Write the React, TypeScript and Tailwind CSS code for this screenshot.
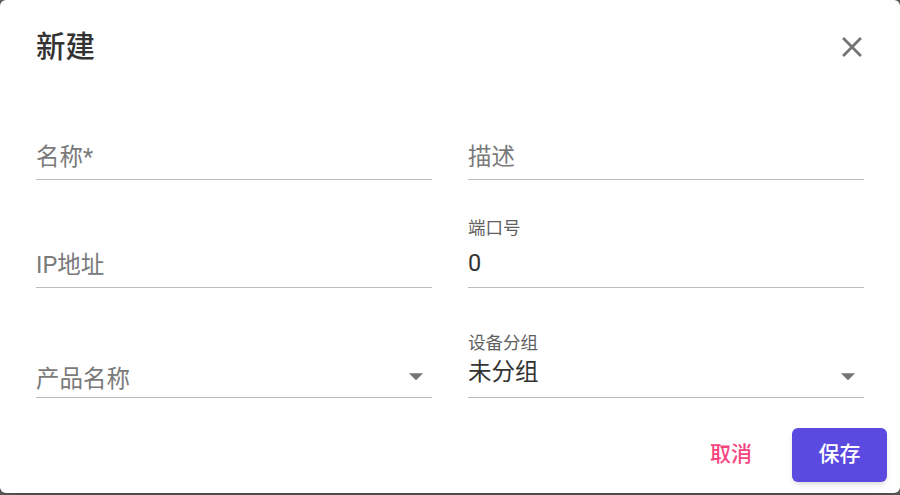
import React from 'react';

const font = { fontFamily: 'Roboto, "Noto Sans CJK SC", sans-serif' };

function ArrowDropDown({ className }: { className?: string }) {
  return (
    <svg width="34" height="34" viewBox="0 0 24 24" className={className} fill="currentColor">
      <path d="M7 10l5 5 5-5z" />
    </svg>
  );
}

function PlainField({ placeholder }: { placeholder: string }) {
  return (
    <div className="flex h-[72px] flex-col justify-end border-b border-[#bdbdbd] pb-[8px]">
      <div className="h-[28px] text-[23.5px] leading-[28px] text-[#7a7a7a]">{placeholder}</div>
    </div>
  );
}

function ValueField({ label, value }: { label: string; value: string }) {
  return (
    <div className="flex h-[72px] flex-col border-b border-[#bdbdbd] pt-[2px]">
      <div className="h-[20px] text-[17.5px] leading-[20px] text-[#5f5f5f]">{label}</div>
      <div className="mt-[11px] h-[28px] text-[23.5px] leading-[28px] text-[#333]">{value}</div>
    </div>
  );
}

function SelectField({ label, value, placeholder }: { label?: string; value?: string; placeholder?: string }) {
  return (
    <div className="flex h-[72px] flex-col border-b border-[#bdbdbd] pt-[7px]">
      <div className="h-[20px] text-[17.5px] leading-[20px] text-[#5f5f5f]">{label}</div>
      <div className="mt-[5px] flex items-start justify-between">
        {value ? (
          <div className="h-[28px] text-[23.5px] leading-[28px] text-[#333]">{value}</div>
        ) : (
          <div className="mt-[7px] h-[28px] text-[23.5px] leading-[28px] text-[#7a7a7a]">{placeholder}</div>
        )}
        <ArrowDropDown className="-mr-[1px] mt-[1px] text-[#757575]" />
      </div>
    </div>
  );
}

export default function App() {
  return (
    <div className="h-[495px] w-[900px] overflow-hidden bg-[#5a5a5a]" style={font}>
      <div className="flex h-[493px] w-[900px] flex-col rounded-[6px] bg-white shadow-xl">
        {/* Header */}
        <div className="flex h-[94px] items-center justify-between pl-9 pr-[31px]">
          <h2 className="text-[29.5px] font-medium leading-[36px] text-[#333]">新建</h2>
          <button className="text-[#757575]" aria-label="close">
            <svg width="34" height="34" viewBox="0 0 24 24" fill="currentColor">
              <path d="M19 6.41L17.59 5 12 10.59 6.41 5 5 6.41 10.59 12 5 17.59 6.41 19 12 13.41 17.59 19 19 17.59 13.41 12z" />
            </svg>
          </button>
        </div>

        {/* Fields */}
        <div className="flex flex-col px-9 pt-[14px]">
          <div className="grid grid-cols-2 gap-x-9">
            <PlainField placeholder="名称*" />
            <PlainField placeholder="描述" />
          </div>
          <div className="mt-9 grid grid-cols-2 gap-x-9">
            <PlainField placeholder="IP地址" />
            <ValueField label="端口号" value="0" />
          </div>
          <div className="mt-[38px] grid grid-cols-2 gap-x-9">
            <SelectField placeholder="产品名称" />
            <SelectField label="设备分组" value="未分组" />
          </div>
        </div>

        {/* Actions */}
        <div className="mt-[30px] flex items-center justify-end pr-[13px]">
          <button className="mr-[26px] h-[54px] px-[14px] text-[21px] font-medium text-[#f5457f]">取消</button>
          <button className="h-[54px] w-[95px] rounded-[6px] bg-[#5b4ae0] text-[21px] font-medium text-white shadow-md">
            保存
          </button>
        </div>
      </div>
    </div>
  );
}
